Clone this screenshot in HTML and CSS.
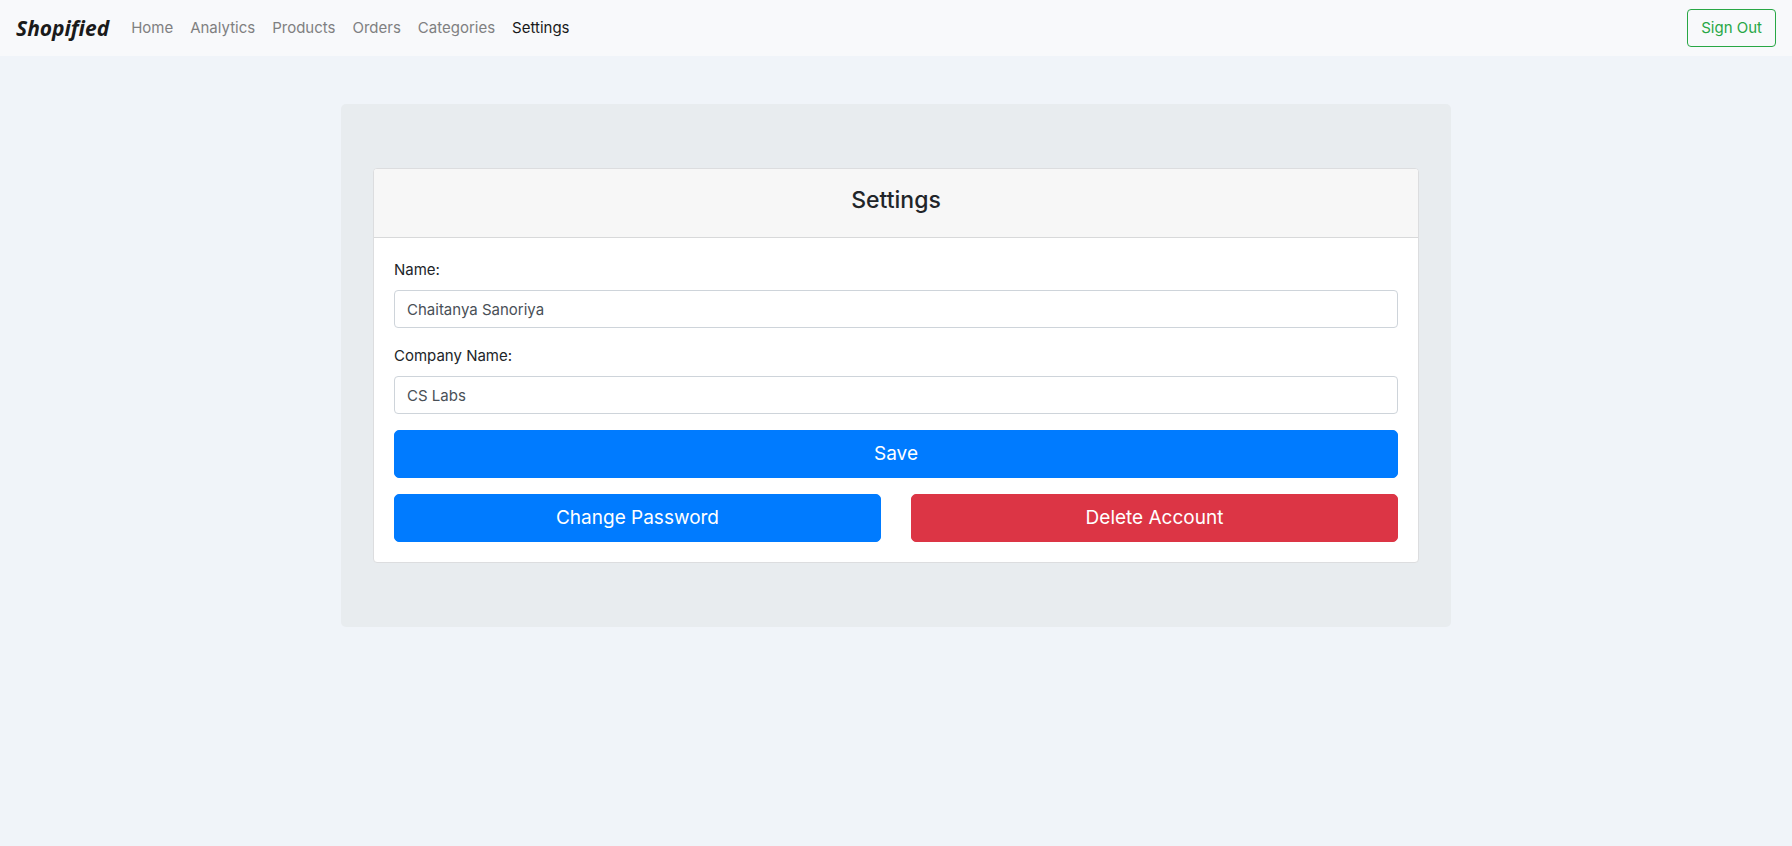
FILE: index.html
```html
<!DOCTYPE html>
<html lang="en">
<head>
  <meta charset="utf-8">
  <meta name="viewport" content="width=device-width, initial-scale=1">
  <title>Settings - Shopified</title>
  <link rel="stylesheet" href="styles.css">
</head>
<body>
  <header class="navbar">
    <a class="brand" href="#">Shopified</a>
    <nav class="nav">
      <a class="nav-link" href="#">Home</a>
      <a class="nav-link" href="#">Analytics</a>
      <a class="nav-link" href="#">Products</a>
      <a class="nav-link" href="#">Orders</a>
      <a class="nav-link" href="#">Categories</a>
      <a class="nav-link active" href="#" aria-current="page">Settings</a>
    </nav>
    <button class="sign-out" type="button">Sign Out</button>
  </header>
  <main class="container">
    <section class="panel">
      <div class="card">
        <div class="card-header"><h1 class="card-title">Settings</h1></div>
        <form class="card-body">
          <div class="field">
            <label for="name">Name:</label>
            <input class="text-input" id="name" type="text" value="Chaitanya Sanoriya">
          </div>
          <div class="field">
            <label for="company">Company Name:</label>
            <input class="text-input" id="company" type="text" value="CS Labs">
          </div>
          <button class="btn btn-primary" type="submit">Save</button>
          <div class="actions">
            <button class="btn btn-primary" type="button">Change Password</button>
            <button class="btn btn-danger" type="button">Delete Account</button>
          </div>
        </form>
      </div>
    </section>
  </main>
</body>
</html>
```
FILE: styles.css
```css
* {
  box-sizing: border-box;
}

body {
  margin: 0;
  background: #f0f4f9;
  color: #212529;
  font-family: Inter, "Liberation Sans", sans-serif;
  font-size: 15px;
  line-height: 24px;
}

button,
input {
  font: inherit;
}

.navbar {
  display: flex;
  align-items: center;
  padding: 8px 16px;
  background: #f8f9fb;
}

.brand {
  margin-right: 14px;
  color: #1a1a1a;
  font-family: "Noto Sans", sans-serif;
  font-size: 21px;
  font-weight: 700;
  font-style: italic;
  line-height: 30px;
  text-decoration: none;
}

.nav {
  display: flex;
  flex: 1;
  gap: 1px;
}

.nav-link {
  padding: 8px;
  color: #7f8081;
  text-decoration: none;
}

.nav-link.active {
  color: #191919;
}

.sign-out {
  padding: 6px 13px;
  border: 1px solid #28a745;
  border-radius: 4px;
  background: transparent;
  color: #28a745;
}

.container {
  max-width: 1140px;
  margin: 48px auto;
  padding: 0 15px;
}

.panel {
  padding: 64px 32px;
  border-radius: 5px;
  background: #e8ecef;
}

.card {
  border: 1px solid #dcdddf;
  border-radius: 4px;
  background: #fff;
}

.card-header {
  padding: 16px 20px 22px;
  border-bottom: 1px solid #d8d9da;
  border-radius: 3px 3px 0 0;
  background: #f7f7f7;
  text-align: center;
}

.card-title {
  margin: 0;
  font-size: 23px;
  font-weight: 500;
  line-height: 30px;
}

.card-body {
  display: flex;
  flex-direction: column;
  gap: 16px;
  padding: 20px;
}

.field {
  display: flex;
  flex-direction: column;
  gap: 8px;
}

.text-input {
  width: 100%;
  height: 38px;
  padding: 6px 12px;
  border: 1px solid #ced4da;
  border-radius: 4px;
  background: #fff;
  color: #495057;
}

.actions {
  display: grid;
  grid-template-columns: 1fr 1fr;
  gap: 30px;
}

.btn {
  padding: 8px 16px;
  border: 1px solid transparent;
  border-radius: 5px;
  color: #fff;
  font-size: 19px;
  line-height: 30px;
}

.btn-primary {
  border-color: #007bff;
  background: #007bff;
}

.btn-danger {
  border-color: #dc3545;
  background: #dc3545;
}
```
